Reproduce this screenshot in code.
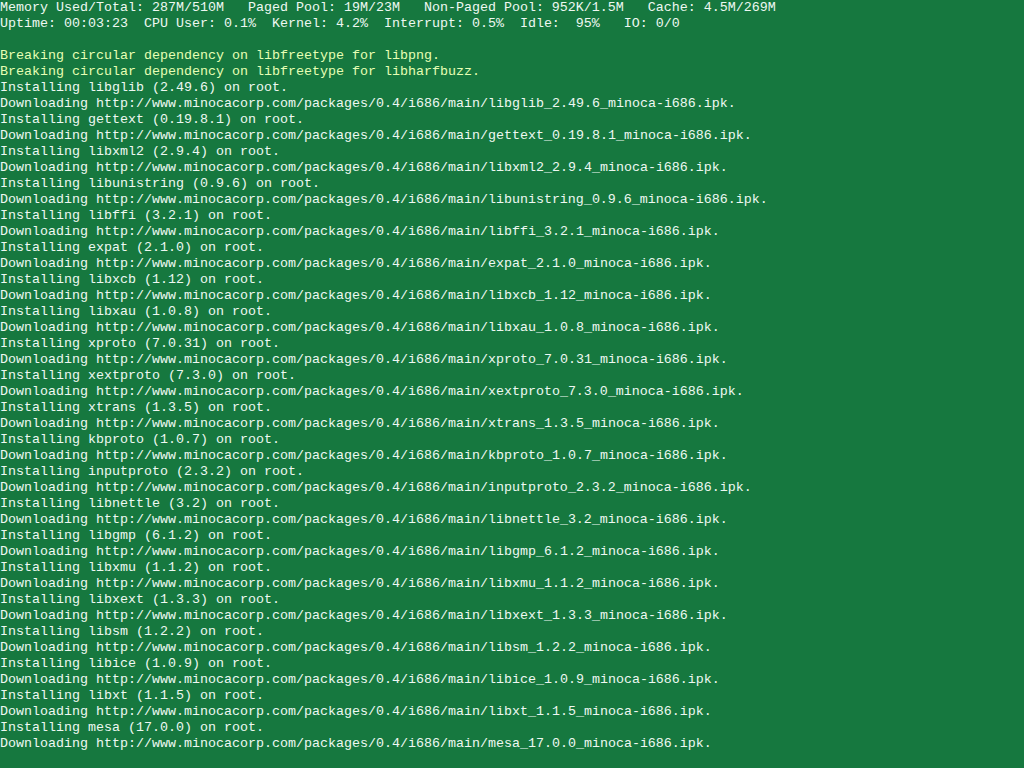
import React from "react";

const pkgs: [string, string][] = [
  ["libglib", "2.49.6"],
  ["gettext", "0.19.8.1"],
  ["libxml2", "2.9.4"],
  ["libunistring", "0.9.6"],
  ["libffi", "3.2.1"],
  ["expat", "2.1.0"],
  ["libxcb", "1.12"],
  ["libxau", "1.0.8"],
  ["xproto", "7.0.31"],
  ["xextproto", "7.3.0"],
  ["xtrans", "1.3.5"],
  ["kbproto", "1.0.7"],
  ["inputproto", "2.3.2"],
  ["libnettle", "3.2"],
  ["libgmp", "6.1.2"],
  ["libxmu", "1.1.2"],
  ["libxext", "1.3.3"],
  ["libsm", "1.2.2"],
  ["libice", "1.0.9"],
  ["libxt", "1.1.5"],
  ["mesa", "17.0.0"],
];

const App = () => {
  return (
    <div className="w-[1024px] h-[768px] bg-[#16783f] overflow-hidden font-['Liberation_Mono',monospace] text-[13.333px] leading-4 text-[#eef8f2] whitespace-pre">
      <div>Memory Used/Total: 287M/510M   Paged Pool: 19M/23M   Non-Paged Pool: 952K/1.5M   Cache: 4.5M/269M</div>
      <div>Uptime: 00:03:23  CPU User: 0.1%  Kernel: 4.2%  Interrupt: 0.5%  Idle:  95%   IO: 0/0</div>
      <div>&nbsp;</div>
      <div className="text-[#e6ffb4]">Breaking circular dependency on libfreetype for libpng.</div>
      <div className="text-[#e6ffb4]">Breaking circular dependency on libfreetype for libharfbuzz.</div>
      {pkgs.map(([name, ver]) => (
        <React.Fragment key={name}>
          <div>Installing {name} ({ver}) on root.</div>
          <div>
            Downloading http://www.minocacorp.com/packages/0.4/i686/main/{name}_{ver}_minoca-i686.ipk.
          </div>
        </React.Fragment>
      ))}
    </div>
  );
};

export default App;
